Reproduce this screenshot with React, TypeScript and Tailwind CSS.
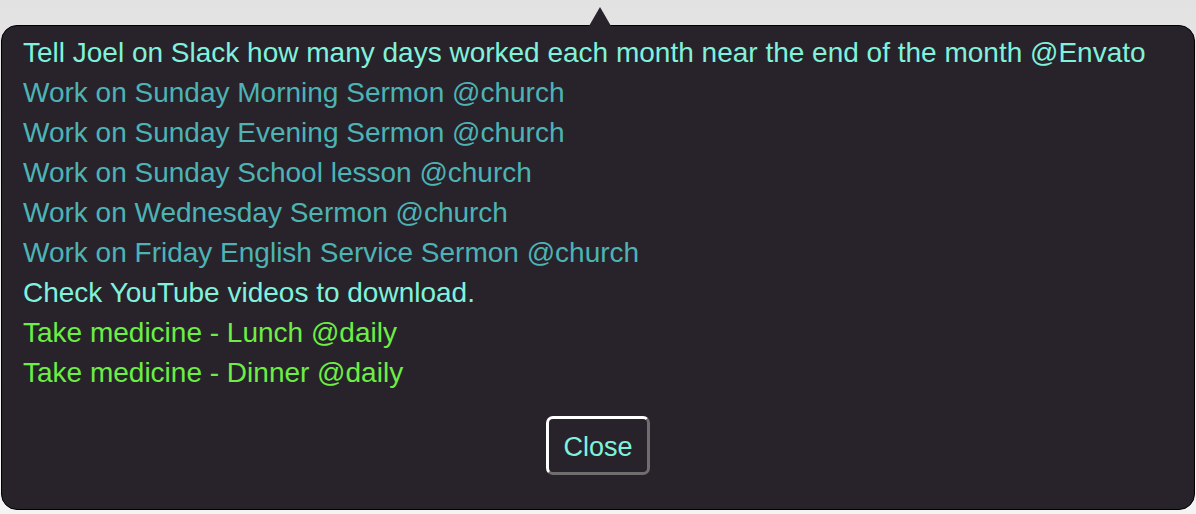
import React from "react";

const items: { text: string; color: string }[] = [
  { text: "Tell Joel on Slack how many days worked each month near the end of the month @Envato", color: "text-[#80f2dc]" },
  { text: "Work on Sunday Morning Sermon @church", color: "text-[#4db3b5]" },
  { text: "Work on Sunday Evening Sermon @church", color: "text-[#4db3b5]" },
  { text: "Work on Sunday School lesson @church", color: "text-[#4db3b5]" },
  { text: "Work on Wednesday Sermon @church", color: "text-[#4db3b5]" },
  { text: "Work on Friday English Service Sermon @church", color: "text-[#4db3b5]" },
  { text: "Check YouTube videos to download.", color: "text-[#80f2dc]" },
  { text: "Take medicine - Lunch @daily", color: "text-[#6cee45]" },
  { text: "Take medicine - Dinner @daily", color: "text-[#6cee45]" },
];

export default function App() {
  return (
    <div
      className="relative w-[1196px] h-[514px] overflow-hidden bg-gradient-to-b from-[#e2e2e2] via-[#f0f0f0] to-[#f4f4f4]"
      style={{ fontFamily: '"Liberation Sans", Arial, sans-serif' }}
    >
      <div className="absolute left-[18px] top-[506px] text-[22px] text-black whitespace-nowrap">
        How to Create a Jekyll Theme from Scratch Adobe Illustrator 100 10/1/21 Richard
      </div>
      <div className="absolute left-[1px] top-[25px] w-[1194px] h-[485px] rounded-[16px] bg-[#28232b] border border-black flex flex-col">
        <div className="absolute left-[587px] top-[-19px] w-0 h-0 border-l-[11px] border-r-[11px] border-b-[19px] border-l-transparent border-r-transparent border-b-[#28232b]" />
        <div className="pl-[21px] pt-[7px] text-[28px] leading-[40px]">
          {items.map((it, i) => (
            <div key={i} className={`${it.color} whitespace-nowrap`}>
              {it.text}
            </div>
          ))}
        </div>
        <div className="flex justify-center mt-[23px]">
          <button className="w-[104px] h-[59px] pt-[3px] rounded-[7px] border-[3px] border-t-white border-l-white border-r-[#6e6e6e] border-b-[#6e6e6e] text-[#80f2dc] text-[27px] bg-[#28232b] leading-none">
            Close
          </button>
        </div>
      </div>
    </div>
  );
}
